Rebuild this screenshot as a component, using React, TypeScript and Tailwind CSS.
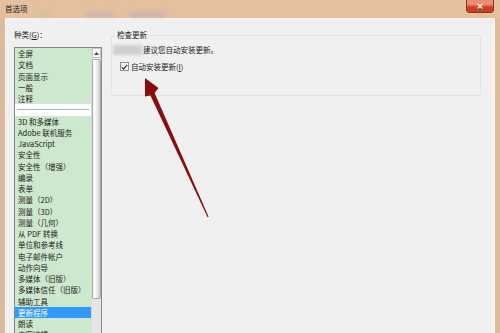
import React from "react";

const cjk = { fontFamily: '"Noto Sans CJK SC", "Liberation Sans", sans-serif' };

const categories: (string | null)[] = [
  "全屏",
  "文档",
  "页面显示",
  "一般",
  "注释",
  null,
  "3D 和多媒体",
  "Adobe 联机服务",
  "JavaScript",
  "安全性",
  "安全性（增强）",
  "编录",
  "表单",
  "测量（2D）",
  "测量（3D）",
  "测量（几何）",
  "从 PDF 转换",
  "单位和参考线",
  "电子邮件帐户",
  "动作向导",
  "多媒体（旧版）",
  "多媒体信任（旧版）",
  "辅助工具",
  "更新程序",
  "朗读",
  "内容编辑",
];

const selected = "更新程序";

const CloseButton = () => (
  <div className="relative mr-[6px] flex h-[13px] w-[28px] shrink-0 flex-col overflow-hidden rounded-b-[4px] border border-t-0 border-[#8a3520] bg-[#c9401f]">
    <div className="h-[5px] bg-[#e68f74]" />
    <div className="h-[2px] bg-[#d8603f]" />
    <span className="absolute inset-0 flex items-center justify-center text-[9px] leading-none font-bold text-white" style={{ fontFamily: '"DejaVu Sans", sans-serif' }}>
      ×
    </span>
  </div>
);

const TitleBar = () => (
  <div className="relative flex h-[18px] items-start justify-between bg-[#e4c09e]">
    <div className="absolute left-[38px] top-[12px] h-[5px] w-[14px] rounded-full bg-[#b9c2a8] opacity-50 blur-[2px]" />
    <div className="absolute left-[86px] top-[12px] h-[5px] w-[28px] rounded-full bg-[#b7a6c6] opacity-50 blur-[2px]" />
    <div className="absolute left-[130px] top-[12px] h-[5px] w-[36px] rounded-full bg-[#b2a5cf] opacity-50 blur-[2px]" />
    <span className="relative pl-[5px] pt-[4px] text-[7.5px] leading-[10px] text-[#222]">首选项</span>
    <CloseButton />
  </div>
);

const CategoryList = () => (
  <div className="mt-[7px] flex h-[300px] w-[88px] border border-[#828790] bg-white">
    <div className="flex-1 bg-[#cde8cd]">
      {categories.map((c, i) =>
        c === null ? (
          <div key={i} className="flex h-[11.25px] items-center bg-white px-[2px]">
            <div className="h-px w-full bg-[#9fb4c8]" />
          </div>
        ) : (
          <div
            key={i}
            className={`h-[11.25px] whitespace-nowrap pl-[3px] text-[7.5px] leading-[11.25px] ${
              c === selected ? "bg-[#3399ff] text-white" : "text-[#1b1b1b]"
            }`}
          >
            {c}
          </div>
        )
      )}
    </div>
    <div className="flex w-[10px] flex-col border-l border-[#dcdcdc] bg-[#e6e6e6]">
      <div className="flex h-[10px] items-center justify-center border border-[#c8c8c8] bg-[#f4f4f4]">
        <svg width="5" height="3" viewBox="0 0 5 3">
          <path d="M0 3 L2.5 0 L5 3 Z" fill="#4a4a4a" />
        </svg>
      </div>
      <div className="mt-[1px] flex h-[240px] rounded-[2px] border border-[#a8a8a8] bg-[#ececec]">
        <div className="w-[3px] bg-[#f8f8f8]" />
        <div className="flex-1" />
        <div className="w-[2px] bg-[#d2d2d2]" />
      </div>
    </div>
  </div>
);

const UpdatePanel = () => (
  <fieldset className="ml-[8px] mt-[11px] h-[66px] w-[370px] rounded-[3px] border border-[#dde4e8] px-[1px]">
    <legend className="ml-[3px] px-[1px] text-[7.5px] leading-[10px] text-[#1b1b1b]">检查更新</legend>
    <div className="mt-[4px] flex h-[11px] items-center">
      <div className="h-[10px] w-[29px] bg-[#cfcfcf] blur-[1.5px]" />
      <span className="ml-[1px] text-[7.5px] text-[#1b1b1b]">建议您自动安装更新。</span>
    </div>
    <div className="mt-[6px] ml-[7px] flex items-center gap-[2px]">
      <div className="flex h-[9px] w-[9px] items-center justify-center border border-[#8f8f8f] bg-[#f4f4f4]">
        <svg width="7" height="6" viewBox="0 0 7 6">
          <path d="M0.8 3.2 L2.6 5 L6.2 0.8" stroke="#2b3a5a" strokeWidth="1.2" fill="none" />
        </svg>
      </div>
      <span className="text-[7.5px] text-[#1b1b1b]">
        自动安装更新(<span className="underline">I</span>)
      </span>
    </div>
  </fieldset>
);

// annotation arrow, drawn only over its own bounding box (x 140–215, y 75–222)
const Arrow = () => (
  <svg className="pointer-events-none absolute left-[140px] top-[75px]" width="75" height="148" viewBox="140 75 75 148">
    <polygon
      points="145,78 158.5,88 154.6,93 208.6,216.8 207.6,217.3 150.4,95.6 145,96.5"
      fill="#860e0e"
    />
  </svg>
);

export default function App() {
  return (
    <div className="relative h-[333px] w-[500px] overflow-hidden bg-[#dcbc9c]" style={cjk}>
      <TitleBar />
      <div className="flex h-[315px] pl-[5px] pr-[5px]">
        <div className="flex flex-1 border-l border-t border-r border-[#fbf7f2] bg-[#f0f0f0] pl-[8px]">
          <div className="flex w-[89px] flex-col">
            <div className="pt-[11px] text-[7.5px] leading-[10px] text-[#1b1b1b]">
              种类(<span className="underline">G</span>)：
            </div>
            <CategoryList />
          </div>
          <UpdatePanel />
        </div>
      </div>
      <Arrow />
    </div>
  );
}
